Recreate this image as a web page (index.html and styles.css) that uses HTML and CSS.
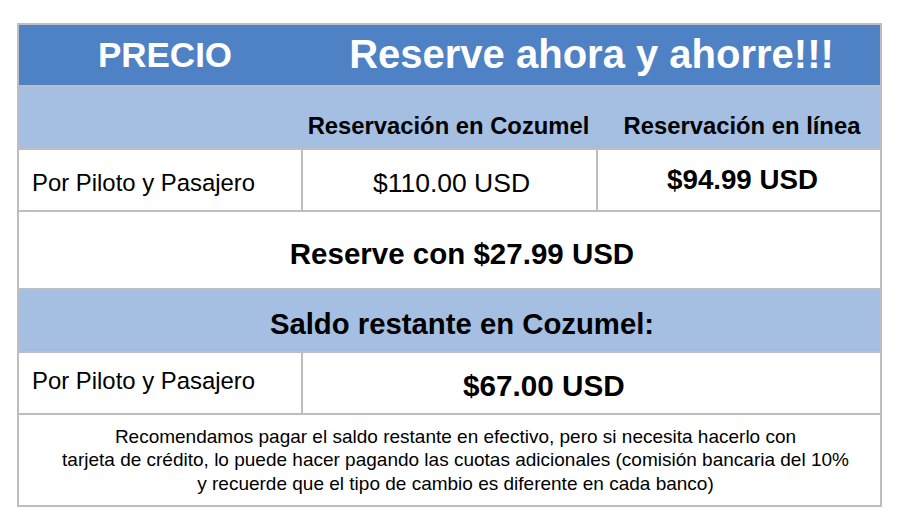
FILE: index.html
```html
<!DOCTYPE html>
<html lang="es">
<head>
<meta charset="utf-8">
<title>Precio</title>
<link rel="stylesheet" href="styles.css">
</head>
<body>
<div class="table">
  <div class="cell head span3">
    <div class="head-grid">
      <div class="head-left">PRECIO</div>
      <div class="head-right">Reserve ahora y ahorre!!!</div>
    </div>
  </div>

  <div class="cell sub span3">
    <div class="sub-grid">
      <div></div>
      <div class="sub-title">Reservación en Cozumel</div>
      <div class="sub-title sub-last">Reservación en línea</div>
    </div>
  </div>

  <div class="cell label row1">Por Piloto y Pasajero</div>
  <div class="cell price row1">$110.00 USD</div>
  <div class="cell price-bold row1">$94.99 USD</div>

  <div class="cell span3 big">Reserve con $27.99 USD</div>

  <div class="cell span3 sub big saldo">Saldo restante en Cozumel:</div>

  <div class="cell label row2">Por Piloto y Pasajero</div>
  <div class="cell span2 remaining">$67.00 USD</div>

  <div class="cell span3 note">Recomendamos pagar el saldo restante en efectivo, pero si necesita hacerlo con<br>tarjeta de crédito, lo puede hacer pagando las cuotas adicionales (comisión bancaria del 10%<br>y recuerde que el tipo de cambio es diferente en cada banco)</div>
</div>
</body>
</html>
```

FILE: styles.css
```css
html, body {
  margin: 0;
  padding: 0;
  background: #ffffff;
}

body {
  font-family: "Liberation Sans", Arial, sans-serif;
  color: #000;
  padding: 23px 0 0 17px;
}

.table {
  display: grid;
  width: 865px;
  box-sizing: border-box;
  padding: 2px;
  gap: 2px;
  background: #bdbdc4;
  grid-template-columns: 282px 293px 282px;
  grid-template-rows: 60px 61px 60px 76px 61px 60px 90px;
}

.cell {
  background: #ffffff;
  display: flex;
  align-items: center;
  box-sizing: border-box;
}

.span3 { grid-column: 1 / 4; }
.span2 { grid-column: 2 / 4; }

.head {
  background: #4f81c5;
  color: #ffffff;
  font-weight: bold;
}

.head-grid {
  display: grid;
  width: 100%;
  grid-template-columns: 284px 577px;
  align-items: center;
}

.head-left {
  font-size: 35px;
  text-align: center;
  padding-left: 8px;
}

.head-right {
  font-size: 40px;
  text-align: center;
  padding-bottom: 2px;
}

.sub {
  background: #a5bfe2;
}

.sub-grid {
  display: grid;
  width: 100%;
  grid-template-columns: 282px 295px 284px;
  padding-top: 16px;
}

.sub-title {
  font-weight: bold;
  font-size: 23.8px;
  text-align: center;
}

.sub-last {
  padding-left: 8px;
}

.label {
  font-size: 23.9px;
  padding: 6px 0 0 13px;
}

.row2.label {
  padding: 0 0 4px 13px;
}

.price {
  font-size: 26.5px;
  justify-content: center;
  padding: 6px 0 0 4px;
}

.price-bold {
  font-size: 27.7px;
  font-weight: bold;
  justify-content: center;
  padding: 0 0 0 7px;
}

.big {
  font-weight: bold;
  font-size: 29.5px;
  justify-content: center;
  padding: 7px 0 0 25px;
}

.saldo {
  font-size: 29.3px;
  padding: 6px 0 0 25px;
}

.remaining {
  font-weight: bold;
  font-size: 29.7px;
  padding: 6px 0 0 160px;
}

.note {
  font-size: 19px;
  line-height: 23.5px;
  justify-content: center;
  text-align: center;
  padding: 0 0 0 12px;
}
```
